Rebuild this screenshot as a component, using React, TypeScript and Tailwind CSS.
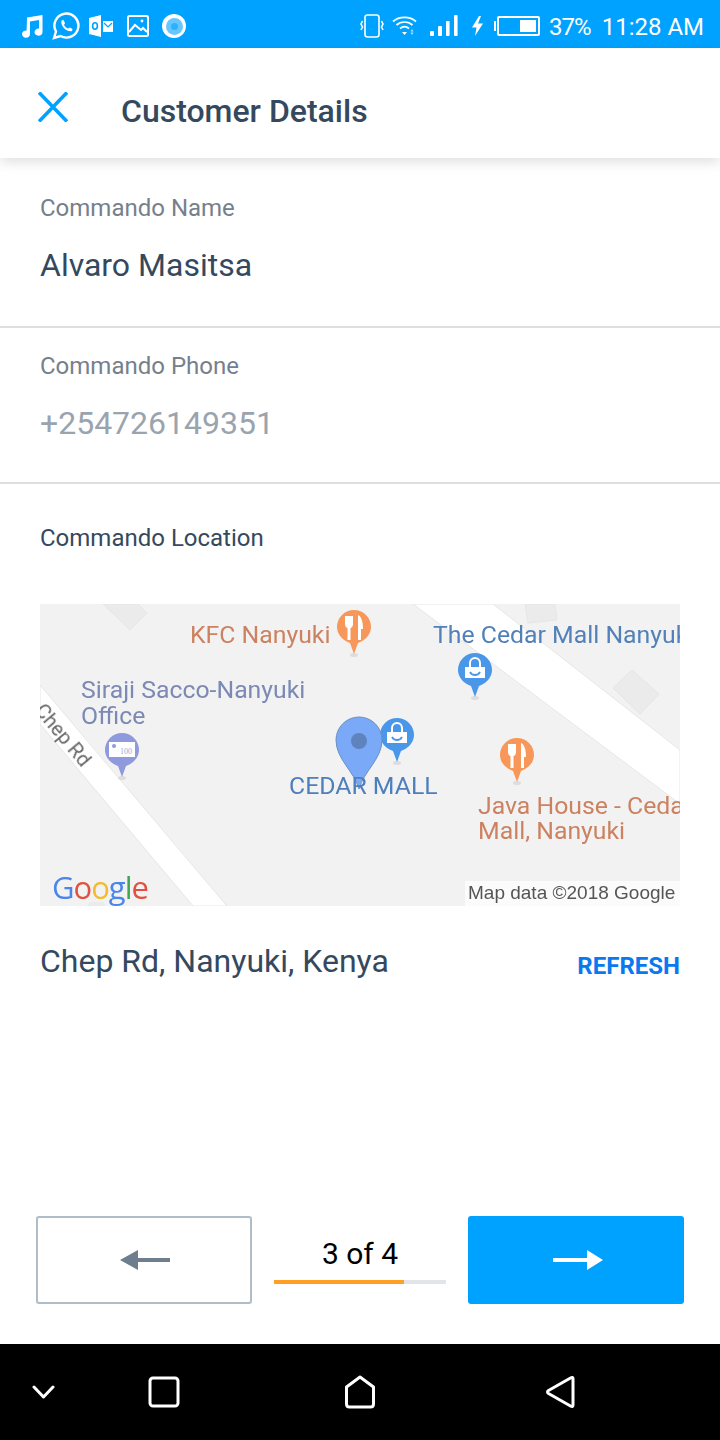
import { useState } from 'react'

const font = "font-['Roboto',sans-serif]"

function StatusLeft() {
  return (
    <div className="flex items-center">
      <svg width="26" height="26" viewBox="0 0 26 26" className="ml-[18px]" fill="white">
        <path d="M9 4.5 L24.5 2 V19 A4 3.6 0 1 1 21 15.6 V7 L12 8.6 V21 A4 3.6 0 1 1 8.6 17.6 Z" />
      </svg>
      <svg width="28" height="28" viewBox="0 0 28 28" className="ml-[8px]" fill="none" stroke="white" strokeWidth="2.4">
        <path d="M2 26 L4 19.5 A12 12 0 1 1 8.5 24 Z" />
        <path d="M9.5 8.5 L11.5 8 L13 11 L12 13 C13 15 14.5 16 16 16.5 L18 15.5 L20.5 17 L20 19 C15 20.5 8 14 9.5 8.5 Z" fill="white" stroke="none" />
      </svg>
      <svg width="24" height="22" viewBox="0 0 24 22" className="ml-[9px]" fill="white">
        <path d="M0 3 L12 0 V22 L0 19 Z" />
        <ellipse cx="6" cy="11" rx="2.4" ry="3.2" fill="none" stroke="#00a2ff" strokeWidth="1.6" />
        <path d="M14 6 H24 V17 H14 Z" />
        <path d="M15 8 L19 12 L23 8" fill="none" stroke="#00a2ff" strokeWidth="1.2" />
      </svg>
      <svg width="22" height="22" viewBox="0 0 22 22" className="ml-[14px]" fill="none" stroke="white" strokeWidth="2">
        <rect x="1" y="1" width="20" height="20" rx="1.5" />
        <path d="M2 17 L8 10 L14 15 L16 13 L20 17" />
        <circle cx="15" cy="6" r="1.4" fill="white" stroke="none" />
      </svg>
      <div className="ml-[13px] flex h-6 w-6 items-center justify-center rounded-full bg-white">
        <div className="flex h-[17px] w-[17px] items-center justify-center rounded-full bg-[#66c7ff]">
          <div className="h-[7px] w-[7px] rounded-full bg-[#2fb0ff]" />
        </div>
      </div>
    </div>
  )
}

function StatusRight() {
  return (
    <div className="flex items-center">
      <svg width="24" height="26" viewBox="0 0 24 26" fill="none" stroke="white" strokeWidth="1.6">
        <rect x="5" y="2" width="14" height="22" rx="2.5" />
        <path d="M2.5 8 L1 11 L2.5 14 L1 17 M21.5 8 L23 11 L21.5 14 L23 17" />
      </svg>
      <svg width="26" height="22" viewBox="0 0 26 22" className="ml-[8px]" fill="none" stroke="white" strokeWidth="1.7">
        <path d="M1 6.5 C7 1 18 1 24 6.5" />
        <path d="M4.5 10 C9 6 16 6 20.5 10" />
        <path d="M8 13.5 C11 11 14 11 17 13.5" />
        <path d="M10 17 H15 L12.5 20 Z" fill="white" stroke="none" />
        <path d="M20 14 L18.5 16.5 H21.5 Z M20 20 L18.5 17.5 H21.5 Z" fill="white" stroke="none" opacity="0.7" />
      </svg>
      <svg width="28" height="22" viewBox="0 0 28 22" className="ml-[12px]" fill="white">
        <rect x="0" y="16" width="4" height="5" rx="1" />
        <rect x="8" y="11" width="4" height="10" rx="1" />
        <rect x="16" y="6" width="3.6" height="15" rx="1" />
        <rect x="24" y="0" width="3.6" height="21" rx="1" />
      </svg>
      <svg width="13" height="22" viewBox="0 0 13 22" className="ml-[13px]" fill="white">
        <path d="M8 1 L1 12.5 H5.5 L4 21 L12 8.5 H7 L10 1 Z" />
      </svg>
      <div className="ml-[10px] h-[10px] w-[2px] bg-white" />
      <div className="ml-[1px] flex h-[20px] w-[43px] justify-end rounded-[2px] border-2 border-white p-[2px]">
        <div className="h-full w-[16px] bg-white" />
      </div>
      <span className="ml-[9px] mt-[2px] text-[24px] leading-none tracking-[-1px] text-white">37%</span>
      <span className="ml-[11px] mr-[16px] mt-[2px] text-[24px] leading-none text-white">11:28 AM</span>
    </div>
  )
}

function Pin({ color, kind }: { color: string; kind: 'food' | 'shop' | 'money' }) {
  return (
    <svg width="36" height="48" viewBox="0 0 36 48">
      <ellipse cx="18" cy="46" rx="4" ry="2" fill="#ddd" />
      <path d="M18 45 L14 34 C6 31 1 25 1 18 A17 17 0 0 1 35 18 C35 25 30 31 22 34 Z" fill={color} />
      {kind === 'food' && (
        <g fill="white">
          <path d="M9 7 H17 V15 C17 18 15 19 14.5 19 V31 H11.5 V19 C11 19 9 18 9 15 Z" />
          <path d="M22 31 V6 C25 7 27 12 27 20 H25 V31 Z" />
        </g>
      )}
      {kind === 'shop' && (
        <g>
          <path d="M8 15 H28 V26 H8 Z" fill="white" />
          <path d="M13 15 V11 A5 5 0 0 1 23 11 V15" fill="none" stroke="white" strokeWidth="2" />
          <path d="M13 20 C15 24 21 24 23 20" fill="none" stroke={color} strokeWidth="1.8" />
        </g>
      )}
      {kind === 'money' && (
        <g>
          <rect x="5" y="10" width="26" height="15" fill="white" />
          <circle cx="10" cy="14" r="2" fill={color} />
          <text x="16" y="22" fontSize="8" fontFamily="Liberation Serif" fill="#9aa7d8">100</text>
        </g>
      )}
    </svg>
  )
}

function MapView() {
  return (
    <div className="relative mx-[40px] mt-[52px] h-[302px] w-[640px] overflow-hidden bg-[#f2f2f2] text-[24.8px] leading-[26px]">
      <svg width="640" height="302" viewBox="0 0 640 302" className="absolute left-0 top-0">
        <path d="M63 0 L90 26 L107 9 L98 0 Z" fill="#ebebeb" stroke="#e6e6e6" />
        <path d="M485 0 L488 19 L517 16 L515 0 Z" fill="#ebebeb" stroke="#e6e6e6" />
        <path d="M573 84 L592 66 L619 90 L600 110 Z" fill="#ebebeb" stroke="#e6e6e6" />
        <path d="M47 302 L50 298 L64 298 L65 302 Z" fill="#ebebeb" />
        <path d="M0 81 L187 302 L153 302 L0 120 Z" fill="white" stroke="#e6e6e6" />
        <path d="M373 0 L453 0 L640 146 L640 200 Z" fill="white" stroke="#e6e6e6" />
      </svg>

      <span className="absolute left-[150px] top-[18px] text-[#cc8260] blur-[0.4px]">KFC Nanyuki</span>
      <div className="absolute left-[296px] top-[5px]"><Pin color="#f7985a" kind="food" /></div>

      <span className="absolute left-[393px] top-[18px] whitespace-nowrap text-[#5181b8] blur-[0.4px]">The Cedar Mall Nanyuki</span>
      <div className="absolute left-[417px] top-[48px]"><Pin color="#4a97ea" kind="shop" /></div>

      <div className="absolute left-[41px] top-[73px] text-[#7c89b4] blur-[0.4px]">
        Siraji Sacco-Nanyuki
        <br />
        Office
      </div>
      <div className="absolute left-[64px] top-[128px]"><Pin color="#8f9adc" kind="money" /></div>

      <span className="absolute left-[-14px] top-[118px] rotate-[50deg] text-[20px] text-[#666] blur-[0.3px]">Chep Rd</span>

      <div className="absolute left-[339px] top-[113px]"><Pin color="#4a97ea" kind="shop" /></div>
      <svg width="50" height="76" viewBox="0 0 50 76" className="absolute left-[294px] top-[111px]">
        <path d="M25 74 C20 56 2 44 2 25 A23 23 0 0 1 48 25 C48 44 30 56 25 74 Z" fill="#7aa9f7" stroke="#6b8fc4" strokeWidth="1" />
        <circle cx="25" cy="26" r="8" fill="#5f83bd" />
      </svg>
      <span className="absolute left-[249px] top-[169px] whitespace-nowrap text-[#4d7fbc] blur-[0.3px]">CEDAR MALL</span>

      <div className="absolute left-[459px] top-[133px]"><Pin color="#f7985a" kind="food" /></div>
      <div className="absolute left-[438px] top-[189px] whitespace-nowrap leading-[25px] text-[#cc8260] blur-[0.4px]">
        Java House - Cedar
        <br />
        Mall, Nanyuki
      </div>

      <div className="absolute bottom-0 left-[12px] flex text-[31px] font-medium leading-[38px] tracking-[-1px] blur-[0.3px] font-['Open_Sans',sans-serif]">
        <span className="text-[#4a85ec]">G</span>
        <span className="text-[#e2513f]">o</span>
        <span className="text-[#f4bb2a]">o</span>
        <span className="text-[#4a85ec]">g</span>
        <span className="text-[#3ea655]">l</span>
        <span className="text-[#e2513f]">e</span>
      </div>

      <div className="absolute bottom-0 right-0 h-[25px] w-[215px] whitespace-nowrap bg-white/70 pl-[3px] text-[19px] leading-[23px] text-[#555] blur-[0.3px] font-['Liberation_Sans',sans-serif]">
        Map data ©2018 Google
      </div>
    </div>
  )
}

export default function App() {
  const [step] = useState(3)

  return (
    <div className={`flex h-[1440px] w-[720px] flex-col bg-white ${font}`}>
      <div className="flex h-[48px] shrink-0 items-center justify-between bg-[#00a2ff] pt-[4px]">
        <StatusLeft />
        <StatusRight />
      </div>

      <div className="relative z-10 flex h-[110px] shrink-0 items-center bg-white shadow-[0_4px_12px_rgba(0,0,0,0.13)]">
        <svg width="30" height="30" viewBox="0 0 30 30" className="ml-[38px] mt-[8px]" stroke="#00a2ff" strokeWidth="3.6">
          <path d="M1 0.5 L29 29.5 M29 0.5 L1 29.5" />
        </svg>
        <h1 className="ml-[53px] mt-[16px] text-[32px] font-medium leading-none text-[#34495e]">Customer Details</h1>
      </div>

      <div className="h-[170px] shrink-0 border-b-2 border-[#dcdfe2] px-[40px] pt-[36px]">
        <div className="text-[24px] leading-[28px] text-[#76808d]">Commando Name</div>
        <div className="mt-[24px] text-[32px] leading-[38px] text-[#34495e]">Alvaro Masitsa</div>
      </div>

      <div className="h-[156px] shrink-0 border-b-2 border-[#dcdfe2] px-[40px] pt-[24px]">
        <div className="text-[24px] leading-[28px] text-[#76808d]">Commando Phone</div>
        <div className="mt-[24px] text-[32px] leading-[38px] text-[#9aa3ae]">+254726149351</div>
      </div>

      <div className="px-[40px] pt-[40px] text-[24px] leading-[28px] text-[#34495e]">Commando Location</div>
      <MapView />

      <div className="mt-[36px] flex items-center justify-between px-[40px]">
        <span className="text-[32px] leading-[38px] text-[#34495e]">Chep Rd, Nanyuki, Kenya</span>
        <span className="mt-[10px] text-[24px] font-bold leading-[28px] text-[#0a78f0]">REFRESH</span>
      </div>

      <div className="mt-auto flex items-center px-[36px] pb-[40px]">
        <button className="flex h-[88px] w-[216px] items-center justify-center rounded-[3px] border-2 border-[#b0bcc6] bg-white">
          <svg width="50" height="20" viewBox="0 0 50 20" fill="#6e7e8e" className="ml-[1px]">
            <path d="M0 10 L18 0 V8 H50 V12 H18 V20 Z" />
          </svg>
        </button>
        <div className="mx-[22px] flex w-[172px] flex-col pt-[2px]">
          <div className="text-center text-[30px] leading-[32px] text-black">{step} of 4</div>
          <div className="mt-[10px] h-[4px] w-full bg-[#e2e5e8]">
            <div className="h-full w-[130px] bg-[#ff9f24]" />
          </div>
        </div>
        <button className="flex h-[88px] w-[216px] items-center justify-center rounded-[3px] bg-[#00a2ff]">
          <svg width="50" height="20" viewBox="0 0 50 20" fill="white" className="ml-[3px]">
            <path d="M50 10 L34 0 V8 H0 V12 H34 V20 Z" />
          </svg>
        </button>
      </div>

      <div className="relative flex h-[96px] shrink-0 items-center bg-black">
        <svg width="24" height="16" viewBox="0 0 24 16" className="ml-[32px]" fill="none" stroke="white" strokeWidth="3" strokeLinecap="round" strokeLinejoin="round">
          <path d="M2 3 L11.5 13 L21 3" />
        </svg>
        <svg width="32" height="32" viewBox="0 0 32 32" className="ml-[92px]" fill="none" stroke="white" strokeWidth="3">
          <rect x="2" y="2" width="28" height="28" rx="3" />
        </svg>
        <svg width="32" height="34" viewBox="0 0 32 34" className="ml-[164px]" fill="none" stroke="white" strokeWidth="3" strokeLinejoin="round">
          <path d="M16 2 L29.5 12 V29 Q29.5 32 26.5 32 H5.5 Q2.5 32 2.5 29 V12 Z" />
        </svg>
        <svg width="32" height="34" viewBox="0 0 32 34" className="ml-[169px]" fill="none" stroke="white" strokeWidth="3" strokeLinejoin="round">
          <path d="M28 4 Q28 1.5 25.5 3 L3.5 15.5 Q1.5 17 3.5 18.5 L25.5 31 Q28 32.5 28 30 Z" />
        </svg>
      </div>
    </div>
  )
}
